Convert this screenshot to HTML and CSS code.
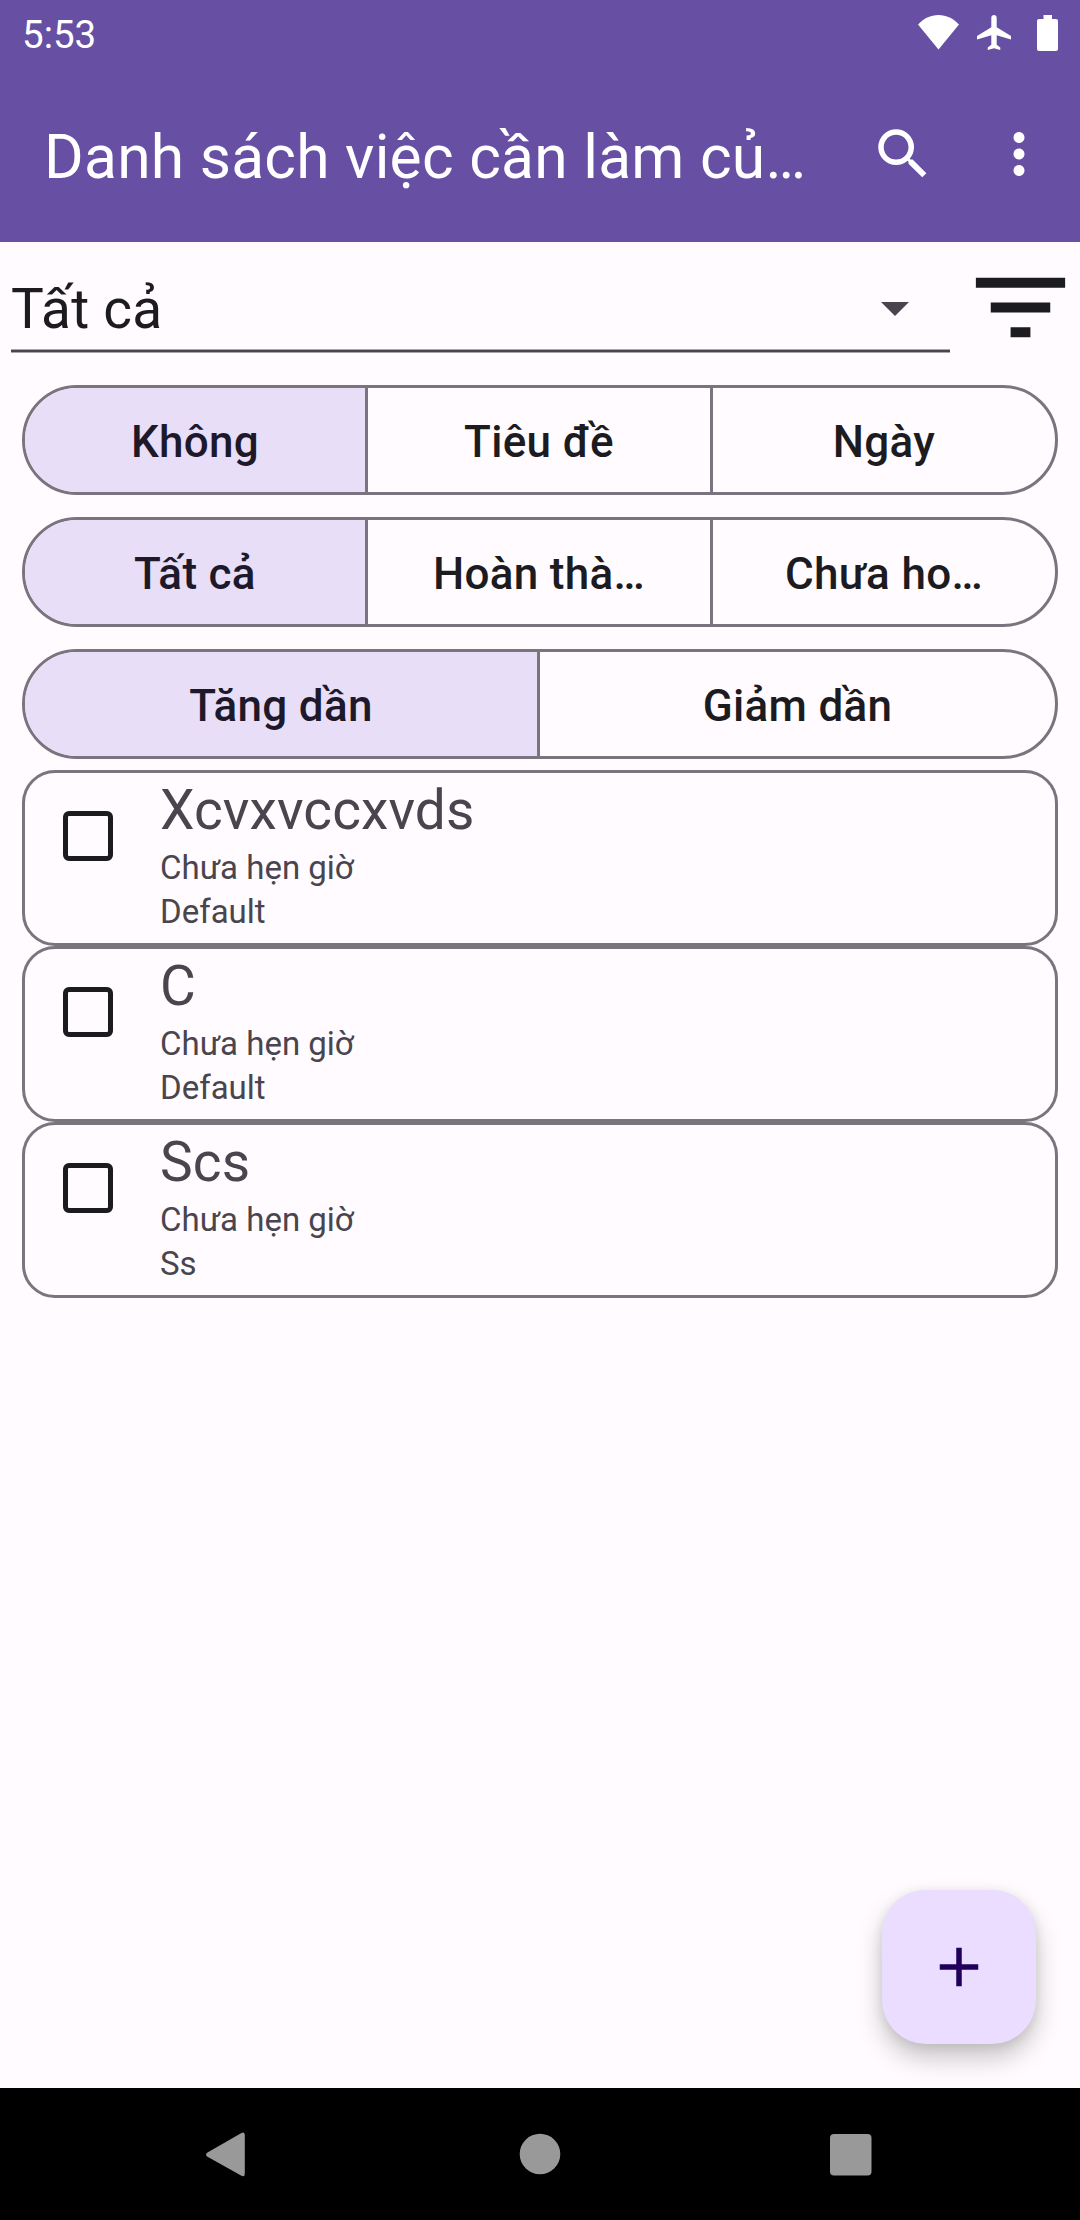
FILE: index.html
```html
<!DOCTYPE html>
<html lang="vi">
<head>
<meta charset="utf-8">
<title>Danh sách việc cần làm</title>
<link rel="stylesheet" href="styles.css">
</head>
<body>
<div class="screen">
  <div class="status-bar">
    <span class="clock">5:53</span>
    <div class="status-icons">
      <svg class="wifi" width="41" height="35" viewBox="0 0 41 35"><path d="M0 9.6C5.500 3.400 12.700 0 20.500 0S35.500 3.400 41 9.600L20.500 34.500z"/></svg>
      <svg class="plane" width="34" height="35" viewBox="2 2 19 20" preserveAspectRatio="none"><path d="M21 16v-2l-8-5V3.500c0-.83-.67-1.500-1.500-1.500S10 2.670 10 3.500V9l-8 5v2l8-2.500V19l-2 1.500V22l3.500-1 3.500 1v-1.500L13 19v-5.500l8 2.500z"/></svg>
      <svg class="battery" width="21" height="36" viewBox="0 0 21 36"><path d="M6.500 0h8.500v4h4a2 2 0 0 1 2 2v28a2 2 0 0 1-2 2H2a2 2 0 0 1-2-2V6a2 2 0 0 1 2-2h4.500z"/></svg>
    </div>
  </div>
  <header class="toolbar">
    <h1 class="title">Danh sách việc cần làm củ…</h1>
    <svg class="search" width="66" height="66" viewBox="0 0 24 24"><path d="M15.500 14h-.79l-.28-.27A6.471 6.471 0 0 0 16 9.500 6.500 6.500 0 1 0 9.500 16c1.610 0 3.090-.59 4.230-1.570l.27.28v.79l5 4.990L20.490 19l-4.990-5zm-6 0C7.010 14 5 11.990 5 9.500S7.010 5 9.500 5 14 7.010 14 9.500 11.990 14 9.500 14z"/></svg>
    <svg class="more" width="66" height="66" viewBox="0 0 24 24"><path d="M12 8c1.100 0 2-.9 2-2s-.9-2-2-2-2 .9-2 2 .9 2 2 2zm0 2c-1.100 0-2 .9-2 2s.9 2 2 2 2-.9 2-2-.9-2-2-2zm0 6c-1.100 0-2 .9-2 2s.9 2 2 2 2-.9 2-2-.9-2-2-2z"/></svg>
  </header>

  <main class="content">
    <div class="filter-row">
      <div class="spinner">
        <span>Tất cả</span>
        <svg width="28" height="14" viewBox="0 0 28 14"><path d="M0 0h28L14 14z"/></svg>
      </div>
      <svg class="filter" width="119" height="119" viewBox="0 0 24 24"><path d="M10 18h4v-2h-4v2zM3 6v2h18V6H3zm3 7h12v-2H6v2z"/></svg>
    </div>

    <div class="groups">
      <div class="group three">
        <div class="option selected">Không</div>
        <div class="option">Tiêu đề</div>
        <div class="option">Ngày</div>
      </div>
      <div class="group three">
        <div class="option selected">Tất cả</div>
        <div class="option">Hoàn thà…</div>
        <div class="option">Chưa ho…</div>
      </div>
      <div class="group two">
        <div class="option selected">Tăng dần</div>
        <div class="option">Giảm dần</div>
      </div>
    </div>

    <div class="tasks">
      <article class="task">
        <span class="checkbox"></span>
        <div class="details"><h2>Xcvxvccxvds</h2><p>Chưa hẹn giờ</p><p>Default</p></div>
      </article>
      <article class="task">
        <span class="checkbox"></span>
        <div class="details"><h2>C</h2><p>Chưa hẹn giờ</p><p>Default</p></div>
      </article>
      <article class="task">
        <span class="checkbox"></span>
        <div class="details"><h2>Scs</h2><p>Chưa hẹn giờ</p><p>Ss</p></div>
      </article>
    </div>

    <div class="fab"><svg width="66" height="66" viewBox="0 0 24 24"><path d="M19 13h-6v6h-2v-6H5v-2h6V5h2v6h6v2z"/></svg></div>
  </main>

  <nav class="nav-bar">
    <svg width="132" height="132" viewBox="0 0 132 132"><path d="M47.500 64.500L81 45.200Q84.800 43 84.800 47V85.500Q84.800 89.500 81 87.600L47.500 68.700Q44.500 66.600 47.500 64.500z"/></svg>
    <svg width="132" height="132" viewBox="0 0 132 132"><circle cx="66" cy="66" r="20.300"/></svg>
    <svg width="132" height="132" viewBox="0 0 132 132"><rect x="45" y="46" width="41.500" height="41.500" rx="4"/></svg>
  </nav>
</div>
</body>
</html>
```
FILE: styles.css
```css
* { box-sizing: border-box; }
body { margin: 0; font-family: Roboto, "Noto Sans", sans-serif; }
h1, h2, p { margin: 0; font-weight: 400; }
svg { display: block; flex: none; }

.screen {
  width: 1080px;
  height: 2220px;
  display: flex;
  flex-direction: column;
  background: #fffbfe;
  color: #1c1b1f;
  overflow: hidden;
}

.status-bar {
  height: 66px;
  flex: none;
  display: flex;
  justify-content: space-between;
  padding: 0 22px;
  background: #6750a4;
  color: #fff;
}
.clock { font-size: 38.5px; line-height: 69px; }
.status-icons { display: flex; padding-top: 15px; fill: #fff; }
.plane { margin-left: 18px; }
.battery { margin-left: 26px; }

.toolbar {
  height: 176px;
  flex: none;
  display: flex;
  align-items: center;
  padding: 0 28px 0 44px;
  background: #6750a4;
  color: #fff;
  fill: #fff;
}
.title {
  flex: 1;
  padding-top: 7px;
  font-size: 60.5px;
  line-height: 71px;
  letter-spacing: 0.26px;
  white-space: nowrap;
}
.search { margin-right: 50px; }

.content {
  position: relative;
  flex: 1;
  display: flex;
  flex-direction: column;
}
.filter-row {
  display: flex;
  height: 132px;
  padding-left: 11px;
}
.spinner {
  width: 940px;
  height: 111px;
  margin-right: 11px;
  padding: 2px 41px 0 0;
  display: flex;
  align-items: center;
  justify-content: space-between;
  font-size: 55px;
  letter-spacing: 0.25px;
  background: linear-gradient(#aaa6ad 0 1px, #49454f 1px 3px, #aaa6ad 3px) bottom / 100% 4px no-repeat;
}
.spinner span { padding-top: 21px; line-height: 64px; }
.spinner svg { margin-top: 21px; fill: #49454f; }
.filter { margin-top: 6px; fill: #1c1b1f; }

.groups {
  display: flex;
  flex-direction: column;
  gap: 22px;
  padding: 11px 22px;
}
.group {
  display: grid;
  height: 110px;
  border: 3px solid #79747e;
  border-radius: 55px;
  overflow: hidden;
}
.three { grid-template-columns: 340px 345px 345px; }
.two { grid-template-columns: 512px 518px; }
.option {
  display: flex;
  align-items: center;
  justify-content: center;
  padding-top: 4px;
  font-size: 44px;
  font-weight: 500;
  letter-spacing: 0.00714em;
}
.option + .option { border-left: 3px solid #79747e; }
.selected { background: #e8def8; color: #1d192b; }

.tasks { padding: 0 22px; color: #49454f; }
.task {
  display: flex;
  height: 176px;
  border: 3px solid #79747e;
  border-radius: 33px;
  padding-left: 38px;
}
.checkbox {
  width: 50px;
  height: 50px;
  margin-top: 38px;
  border: 5.5px solid #1c1b1f;
  border-radius: 6px;
}
.details { margin-left: 47px; padding-top: 2px; }
.details h2 { margin-bottom: 1px; font-size: 55px; line-height: 70px; letter-spacing: 0.1px; }
.details p { font-size: 33px; line-height: 44px; }

.fab {
  position: absolute;
  right: 44px;
  bottom: 44px;
  width: 154px;
  height: 154px;
  display: flex;
  align-items: center;
  justify-content: center;
  border-radius: 44px;
  background: #eaddff;
  fill: #21005d;
  box-shadow: 0 14px 26px rgba(0, 0, 0, 0.22), 0 2px 12px rgba(0, 0, 0, 0.09);
}

.nav-bar {
  height: 132px;
  flex: none;
  display: flex;
  justify-content: space-between;
  padding: 0 163px 0 160px;
  background: #000;
  fill: #999;
}
.nav-bar svg:nth-child(2) { margin-left: 3px; }
```
